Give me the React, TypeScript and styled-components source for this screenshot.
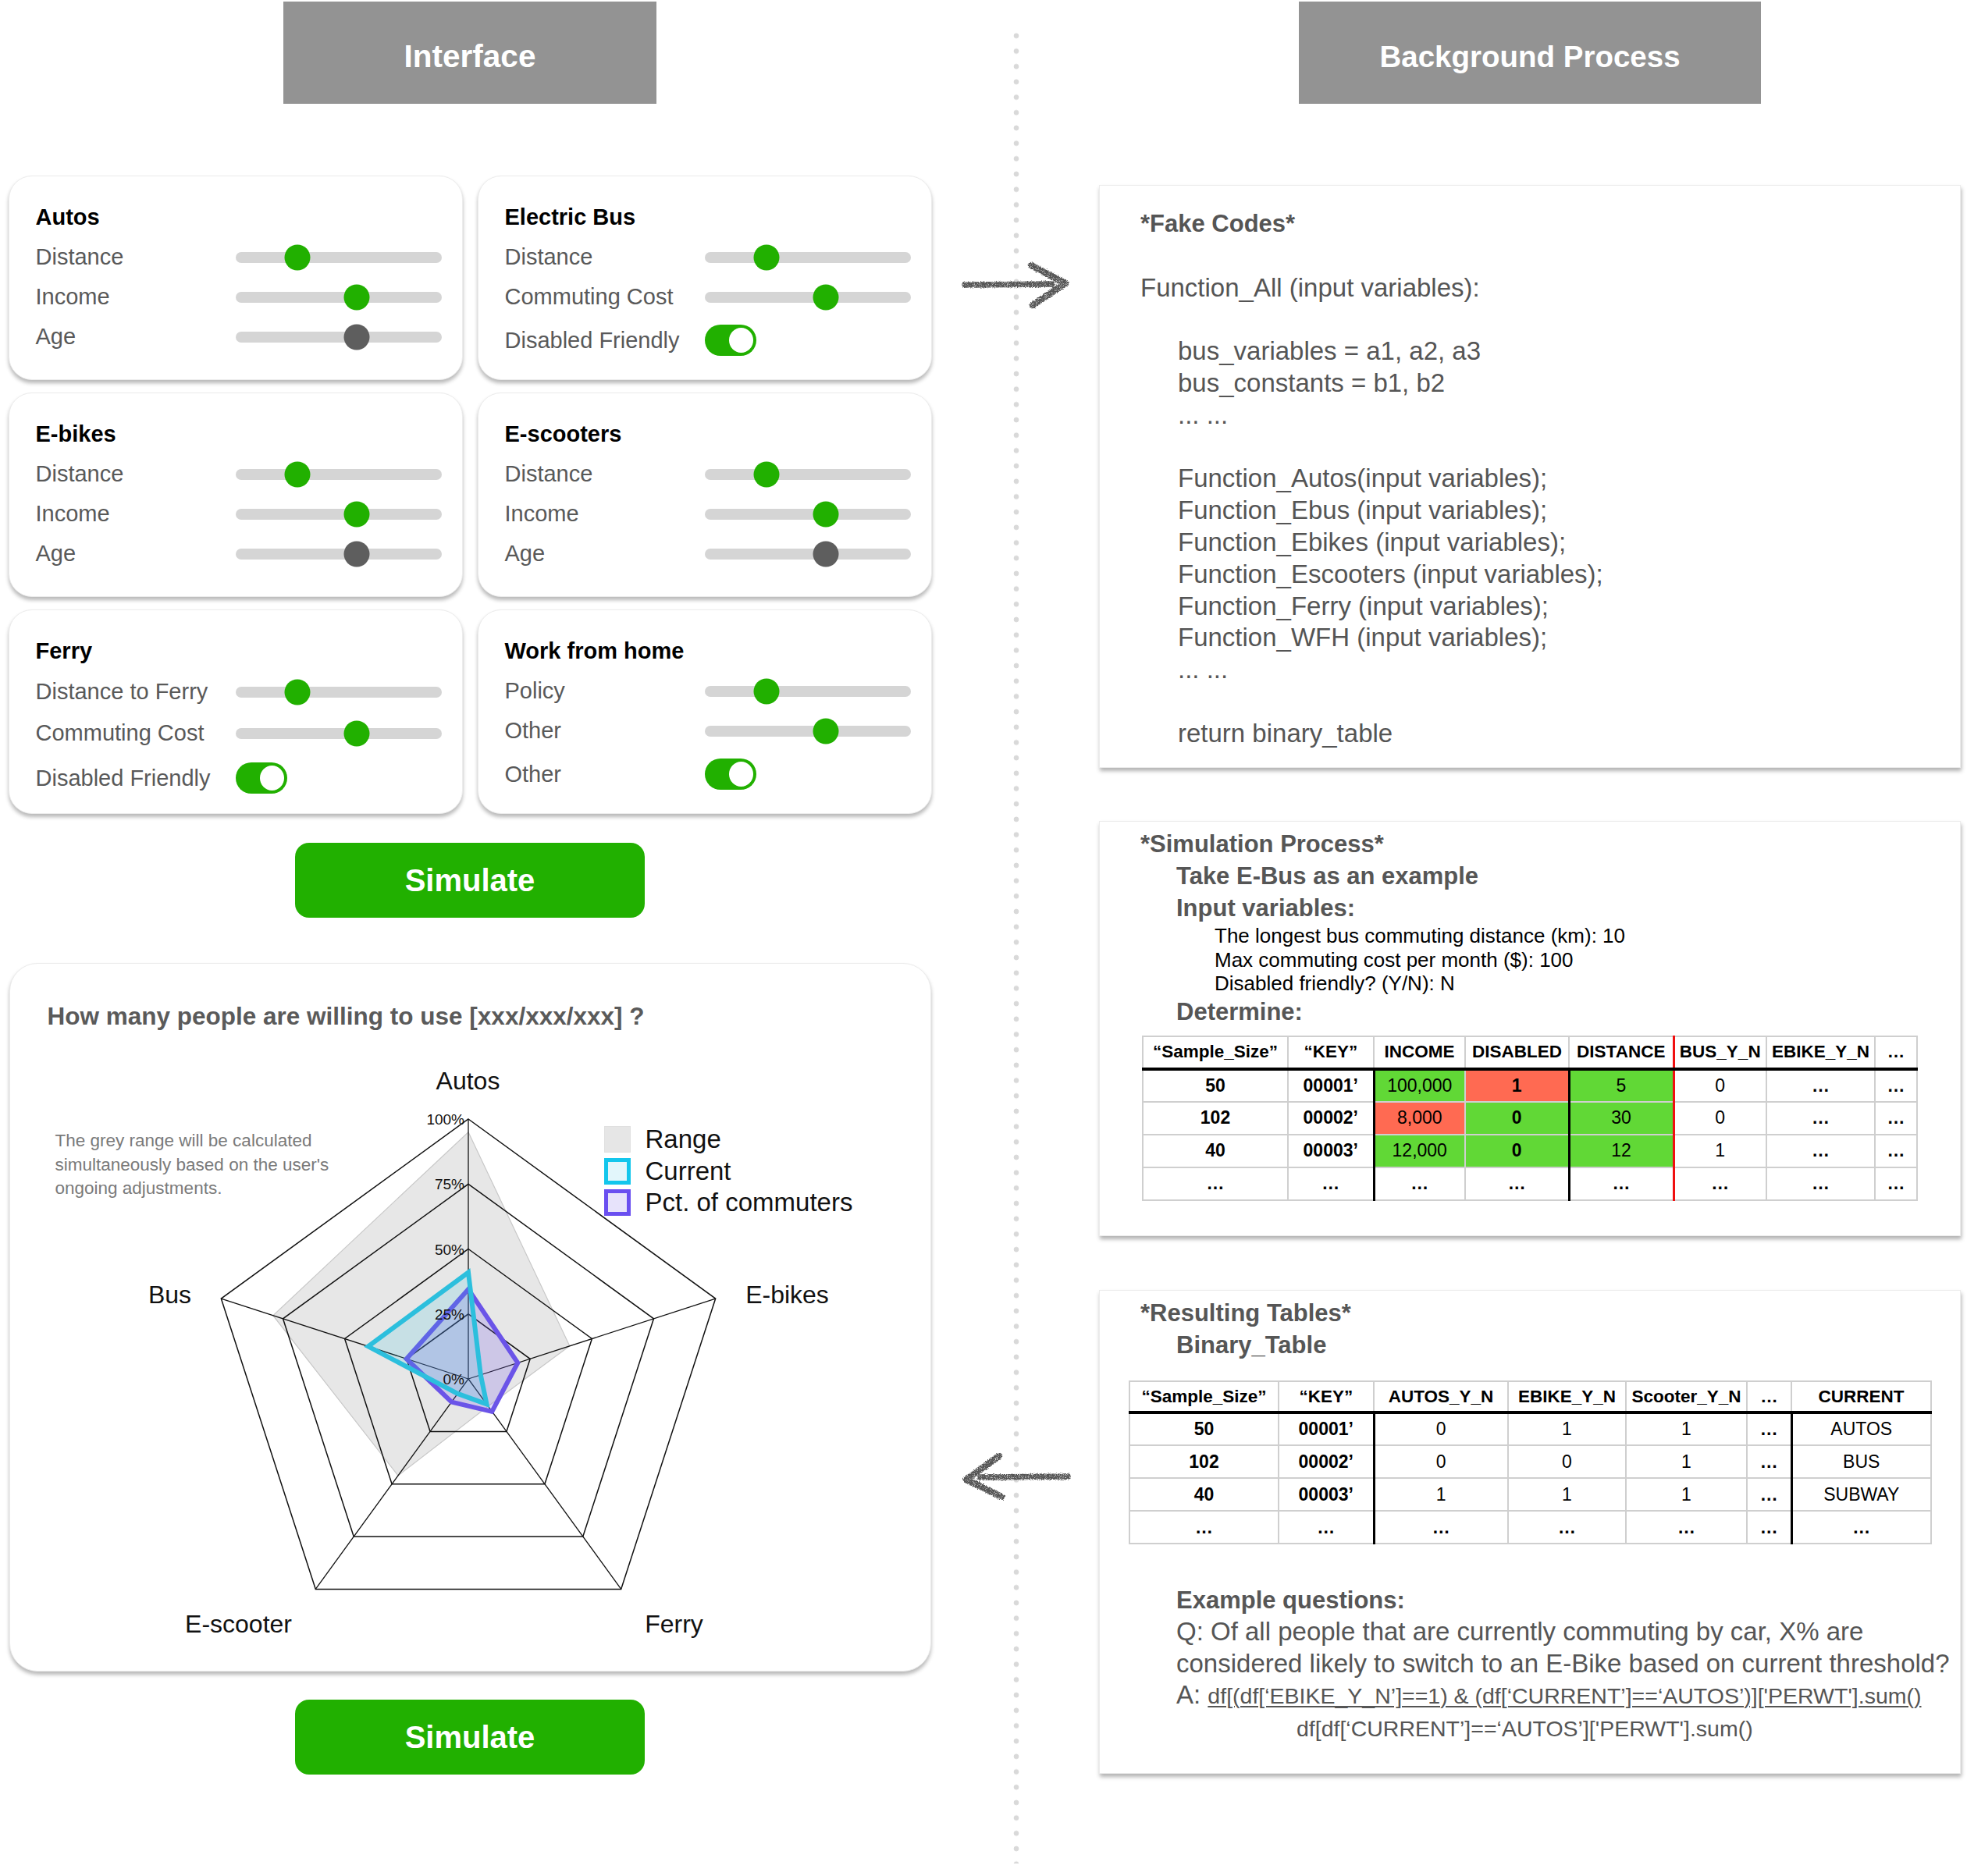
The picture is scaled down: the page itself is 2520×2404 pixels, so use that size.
import React from "react";
import styled, { createGlobalStyle } from "styled-components";

const FONT = `"Liberation Sans", Arial, Helvetica, sans-serif`;

const GlobalStyle = createGlobalStyle`
  *, *::before, *::after { box-sizing: border-box; }
  html, body { margin: 0; padding: 0; background: #ffffff; }
  body { font-family: ${FONT}; }
`;

/* ---------- page skeleton ---------- */
const Page = styled.div`
  width: 2520px;
  height: 2404px;
  display: flex;
  background: #fff;
  overflow: hidden;
  font-family: ${FONT};
`;

const LeftColumn = styled.section`
  width: 1204px;
  flex: none;
  padding: 2px 10px 0;
  display: flex;
  flex-direction: column;
  align-items: center;
`;

const Divider = styled.div`
  width: 196px;
  flex: none;
  padding: 36px 0 16px;
  display: flex;
  flex-direction: column;
  align-items: center;
  background-image: radial-gradient(circle, #d9d9d9 3px, rgba(217, 217, 217, 0) 3.7px);
  background-size: 12px 19.7px;
  background-repeat: repeat-y;
  background-position: center top;
  background-origin: content-box;
  background-clip: content-box;
`;

const RightColumn = styled.section`
  width: 1120px;
  flex: none;
  padding: 2px 8px 0;
  display: flex;
  flex-direction: column;
  align-items: center;
`;

const SectionHeader = styled.div<{ $w: number; $size: number }>`
  width: ${(p) => p.$w}px;
  height: 131px;
  flex: none;
  padding-top: 10px;
  background: #939393;
  color: #fff;
  display: flex;
  align-items: center;
  justify-content: center;
  font-size: ${(p) => p.$size}px;
  font-weight: 700;
`;

/* ---------- control cards ---------- */
const CardGrid = styled.div`
  margin-top: 92px;
  display: grid;
  grid-template-columns: 582px 582px;
  gap: 16px 19px;
`;

const ControlCard = styled.div`
  height: 262px;
  background: #fff;
  border: 1.5px solid #ececec;
  border-radius: 30px;
  box-shadow: 0 4px 5px rgba(0, 0, 0, 0.28);
  padding: 35px 20px 0 34px;
`;

const CardTitle = styled.div`
  font-size: 29px;
  line-height: 34px;
  font-weight: 700;
  color: #000;
  margin-bottom: 9px;
`;

const ControlRow = styled.div<{ $h: number }>`
  display: grid;
  grid-template-columns: 256px 264px;
  align-items: center;
  height: ${(p) => p.$h}px;
`;

const ControlLabel = styled.span`
  font-size: 29px;
  color: #595959;
  white-space: nowrap;
`;

const Track = styled.div`
  position: relative;
  width: 264px;
  height: 14px;
  border-radius: 7px;
  background: #d5d5d5;
`;

const Thumb = styled.span<{ $dark?: boolean }>`
  position: absolute;
  top: 50%;
  width: 33px;
  height: 33px;
  border-radius: 50%;
  background: ${(p) => (p.$dark ? "#5e5e5e" : "#21b000")};
  transform: translate(-50%, -50%);
`;

const Toggle = styled.span`
  display: flex;
  align-items: center;
  justify-content: flex-end;
  width: 66px;
  height: 40px;
  padding: 0 4px;
  border-radius: 20px;
  background: #21b000;
`;

const Knob = styled.span`
  width: 31px;
  height: 32px;
  border-radius: 50%;
  background: #fff;
`;

const SimulateButton = styled.button<{ $mt: number }>`
  margin-top: ${(p) => p.$mt}px;
  flex: none;
  width: 448px;
  height: 96px;
  border: none;
  border-radius: 18px;
  background: #21b000;
  color: #fff;
  font-family: ${FONT};
  font-size: 40px;
  font-weight: 700;
  cursor: pointer;
`;

/* ---------- chart card ---------- */
const ChartCard = styled.div`
  margin-top: 58px;
  flex: none;
  width: 1181px;
  height: 908px;
  background: #fff;
  border: 1px solid #ebebeb;
  border-radius: 36px;
  box-shadow: 0 4px 5px rgba(0, 0, 0, 0.28);
  display: flex;
  flex-direction: column;
`;

const ChartTitle = styled.h2`
  margin: 47px 0 0 48px;
  font-size: 31.5px;
  line-height: 40px;
  font-weight: 700;
  color: #5a5a5a;
  white-space: nowrap;
`;

const ChartArea = styled.div`
  margin-top: 18px;
  height: 800px;
  display: grid;
  & > * {
    grid-area: 1 / 1;
  }
`;

const ChartNote = styled.p`
  justify-self: start;
  align-self: start;
  margin: 107px 0 0 58px;
  font-size: 22.5px;
  line-height: 30.5px;
  color: #7a7a7a;
  z-index: 1;
`;

const Legend = styled.div`
  justify-self: start;
  align-self: start;
  margin: 103px 0 0 761px;
  display: flex;
  flex-direction: column;
  gap: 6px;
  z-index: 1;
`;

const LegendItem = styled.div`
  display: flex;
  align-items: center;
  gap: 19px;
  height: 34.5px;
  font-size: 33px;
  color: #111;
  white-space: nowrap;
`;

const Swatch = styled.span<{ $kind: "range" | "current" | "pct" }>`
  width: 34px;
  height: 34px;
  flex: none;
  background: ${(p) =>
    p.$kind === "range" ? "#e6e6e6" : p.$kind === "current" ? "#e2f6fb" : "#e7e3fb"};
  border: ${(p) =>
    p.$kind === "range"
      ? "1px solid #e0e0e0"
      : p.$kind === "current"
      ? "5px solid #13c6ec"
      : "5px solid #6a4ff0"};
`;

const RadarSvg = styled.svg`
  display: block;
  font-family: ${FONT};
`;

/* ---------- right side cards ---------- */
const ProcessCard = styled.div<{ $h: number; $mt: number; $pt: number }>`
  width: 1104px;
  height: ${(p) => p.$h}px;
  margin-top: ${(p) => p.$mt}px;
  flex: none;
  background: #fff;
  border: 1px solid #ececec;
  box-shadow: 1px 4px 5px rgba(0, 0, 0, 0.3);
  padding: ${(p) => p.$pt}px 0 0 52px;
  display: flex;
  flex-direction: column;
  align-items: flex-start;
`;

const CodeLine = styled.div<{ $indent?: boolean; $bold?: boolean }>`
  height: 40.8px;
  line-height: 40.8px;
  font-size: ${(p) => (p.$bold ? 31 : 33)}px;
  font-weight: ${(p) => (p.$bold ? 700 : 400)};
  color: #555;
  padding-left: ${(p) => (p.$indent ? 48 : 0)}px;
  white-space: nowrap;
`;

const Heading = styled.div<{ $indent?: number; $mt?: number }>`
  font-size: 31px;
  line-height: 41px;
  font-weight: 700;
  color: #565656;
  padding-left: ${(p) => p.$indent ?? 0}px;
  margin-top: ${(p) => p.$mt ?? 0}px;
  white-space: nowrap;
`;

const DetailLine = styled.div`
  font-size: 26px;
  line-height: 30.5px;
  color: #000;
  padding-left: 95px;
  white-space: nowrap;
`;

const ProseLine = styled.div<{ $indent?: number }>`
  font-size: 33px;
  line-height: 40.5px;
  color: #555;
  padding-left: ${(p) => p.$indent ?? 46}px;
  white-space: nowrap;
`;

const Formula = styled.span<{ $under?: boolean }>`
  font-size: 28.5px;
  text-decoration: ${(p) => (p.$under ? "underline" : "none")};
  text-decoration-thickness: 1.5px;
  text-underline-offset: 3px;
`;

const DataTable = styled.table<{ $mt: number; $ml: number }>`
  margin: ${(p) => p.$mt}px 0 0 ${(p) => p.$ml}px;
  border-collapse: collapse;
  table-layout: fixed;
  color: #000;
  font-family: ${FONT};
`;

const Th = styled.th<{ $h: number; $red?: boolean }>`
  height: ${(p) => p.$h}px;
  padding: 0;
  border: 2px solid #cfcfcf;
  border-bottom: 4px solid #000;
  ${(p) => (p.$red ? "border-left: 3px solid #f01010;" : "")}
  font-size: 22.5px;
  font-weight: 700;
  text-align: center;
  white-space: nowrap;
  overflow: visible;
`;

const Td = styled.td<{ $bg?: string; $bold?: boolean; $edge?: "black" | "red" }>`
  height: 42px;
  padding: 0;
  border: 2px solid #cfcfcf;
  ${(p) =>
    p.$edge === "black"
      ? "border-left: 3px solid #000;"
      : p.$edge === "red"
      ? "border-left: 3px solid #f01010;"
      : ""}
  background: ${(p) => p.$bg ?? "transparent"};
  font-size: 23px;
  font-weight: ${(p) => (p.$bold ? 700 : 400)};
  text-align: center;
  white-space: nowrap;
`;

/* ---------- data ---------- */
type Row = { label: string; value?: number; dark?: boolean; toggle?: boolean };
type Card = { title: string; rows: Row[]; rowH?: number };

const CARDS: Card[] = [
  { title: "Autos", rows: [{ label: "Distance", value: 0.3 }, { label: "Income", value: 0.59 }, { label: "Age", value: 0.59, dark: true }] },
  { title: "Electric Bus", rows: [{ label: "Distance", value: 0.3 }, { label: "Commuting Cost", value: 0.59 }, { label: "Disabled Friendly", toggle: true }] },
  { title: "E-bikes", rows: [{ label: "Distance", value: 0.3 }, { label: "Income", value: 0.59 }, { label: "Age", value: 0.59, dark: true }] },
  { title: "E-scooters", rows: [{ label: "Distance", value: 0.3 }, { label: "Income", value: 0.59 }, { label: "Age", value: 0.59, dark: true }] },
  { title: "Ferry", rowH: 53, rows: [{ label: "Distance to Ferry", value: 0.3 }, { label: "Commuting Cost", value: 0.59 }, { label: "Disabled Friendly", toggle: true }] },
  { title: "Work from home", rows: [{ label: "Policy", value: 0.3 }, { label: "Other", value: 0.59 }, { label: "Other", toggle: true }] },
];

const AXES = [
  { name: "Autos", x: 586.5, y: 45 },
  { name: "E-bikes", x: 995.5, y: 319 },
  { name: "Ferry", x: 850.5, y: 741 },
  { name: "E-scooter", x: 292.5, y: 741 },
  { name: "Bus", x: 204.5, y: 319 },
];
const ANG = [-90, -18, 54, 126, 198].map((d) => (d * Math.PI) / 180);
const CX = 587;
const CY = 427;
const R = 333;
const pt = (i: number, r: number) => [CX + Math.cos(ANG[i]) * R * r, CY + Math.sin(ANG[i]) * R * r];
const poly = (vals: number[]) => vals.map((v, i) => pt(i, v).map((n) => n.toFixed(1)).join(",")).join(" ");

const RANGE = [0.95, 0.41, 0.13, 0.46, 0.79];
const CURRENT = [0.41, 0.05, 0.12, 0.07, 0.405];
const PCT = [0.345, 0.2, 0.155, 0.11, 0.25];

const GREEN = "#61d836";
const RED = "#ff6a52";

/* ---------- pieces ---------- */
function ControlPanel({ card }: { card: Card }) {
  const base = card.rowH ?? 51;
  return (
    <ControlCard>
      <CardTitle>{card.title}</CardTitle>
      {card.rows.map((r, i) => (
        <ControlRow key={i} $h={r.toggle ? base + 9 : base}>
          <ControlLabel>{r.label}</ControlLabel>
          {r.toggle ? (
            <Toggle>
              <Knob />
            </Toggle>
          ) : (
            <Track>
              <Thumb $dark={r.dark} style={{ left: `${(r.value ?? 0) * 100}%` }} />
            </Track>
          )}
        </ControlRow>
      ))}
    </ControlCard>
  );
}

function Radar() {
  const rings = [0.25, 0.5, 0.75, 1];
  return (
    <RadarSvg width="1179" height="800" viewBox="0 0 1179 800">
      <polygon points={poly(RANGE)} fill="#e7e7e7" stroke="#c8c8c8" strokeWidth="1.2" />
      {rings.map((r) => (
        <polygon key={r} points={poly([r, r, r, r, r])} fill="none" stroke="#111" strokeWidth="1.5" />
      ))}
      {ANG.map((_, i) => {
        const [x, y] = pt(i, 1);
        return <line key={i} x1={CX} y1={CY} x2={x} y2={y} stroke="#111" strokeWidth="1.3" />;
      })}
      <polygon points={poly(PCT)} fill="rgba(112, 88, 232, 0.22)" stroke="#6b54e8" strokeWidth="6" strokeLinejoin="miter" />
      <polygon points={poly(CURRENT)} fill="rgba(40, 190, 222, 0.17)" stroke="#2cbfdd" strokeWidth="6" strokeLinejoin="miter" />
      {[0, 1, 2, 3, 4].map((k) => (
        <text key={k} x={CX - 5} y={CY - (R * k) / 4 + 7} fontSize="19" textAnchor="end" fill="#111">
          {k * 25}%
        </text>
      ))}
      {AXES.map((a) => (
        <text key={a.name} x={a.x} y={a.y} fontSize="32" textAnchor="middle" dominantBaseline="central" fill="#111">
          {a.name}
        </text>
      ))}
    </RadarSvg>
  );
}

function ChalkArrow({ dir, top, id }: { dir: "right" | "left"; top: number; id: string }) {
  return (
    <svg width="140" height="64" viewBox="0 0 140 64" style={{ display: "block", flex: "none", marginTop: top }}>
      <defs>
        <filter id={id} x="-10%" y="-30%" width="120%" height="160%">
          <feTurbulence type="fractalNoise" baseFrequency="0.85" numOctaves="2" seed="4" result="noise" />
          <feDisplacementMap in="SourceGraphic" in2="noise" scale="4" xChannelSelector="R" yChannelSelector="G" result="disp" />
          <feTurbulence type="fractalNoise" baseFrequency="1.4" numOctaves="1" seed="11" result="grain" />
          <feColorMatrix
            in="grain"
            type="matrix"
            values="0 0 0 0 0  0 0 0 0 0  0 0 0 0 0  3.2 0 0 0 -0.55"
            result="mask"
          />
          <feComposite in="disp" in2="mask" operator="in" />
        </filter>
      </defs>
      <g stroke="#555" fill="none" strokeLinecap="round" strokeLinejoin="round" filter={`url(#${id})`}>
        {dir === "right" ? (
          <>
            <path d="M4 31 L116 30" strokeWidth="7.5" />
            <path d="M89 6 L133 29 L91 57" strokeWidth="8.5" />
          </>
        ) : (
          <>
            <path d="M24 33 L136 32" strokeWidth="7.5" />
            <path d="M48 6 L6 36 L51 58" strokeWidth="8.5" />
          </>
        )}
      </g>
    </svg>
  );
}

const CODE: { text: string; indent?: boolean; bold?: boolean }[] = [
  { text: "*Fake Codes*", bold: true },
  { text: "" },
  { text: "Function_All (input variables):" },
  { text: "" },
  { text: "bus_variables = a1, a2, a3", indent: true },
  { text: "bus_constants = b1, b2", indent: true },
  { text: "... ...", indent: true },
  { text: "" },
  { text: "Function_Autos(input variables);", indent: true },
  { text: "Function_Ebus (input variables);", indent: true },
  { text: "Function_Ebikes (input variables);", indent: true },
  { text: "Function_Escooters (input variables);", indent: true },
  { text: "Function_Ferry (input variables);", indent: true },
  { text: "Function_WFH (input variables);", indent: true },
  { text: "... ...", indent: true },
  { text: "" },
  { text: "return binary_table", indent: true },
];

type Cell = { t: string; bg?: string; bold?: boolean; edge?: "black" | "red" };

const SIM_COLS = [186, 110, 117, 133, 134, 119, 139, 54];
const SIM_HEAD = ["“Sample_Size”", "“KEY”", "INCOME", "DISABLED", "DISTANCE", "BUS_Y_N", "EBIKE_Y_N", "…"];
const simRow = (a: string, b: string, inc: string, incBg: string, dis: string, disBg: string, dist: string, bus: string, last?: boolean): Cell[] => [
  { t: a, bold: true },
  { t: b, bold: true },
  { t: inc, bg: incBg, edge: "black", bold: last },
  { t: dis, bg: disBg, bold: true },
  { t: dist, bg: last ? undefined : GREEN, edge: "black", bold: last },
  { t: bus, edge: "red", bold: last },
  { t: "…", bold: true },
  { t: "…", bold: true },
];
const SIM_ROWS: Cell[][] = [
  simRow("50", "00001’", "100,000", GREEN, "1", RED, "5", "0"),
  simRow("102", "00002’", "8,000", RED, "0", GREEN, "30", "0"),
  simRow("40", "00003’", "12,000", GREEN, "0", GREEN, "12", "1"),
  simRow("…", "…", "…", "", "…", "", "…", "…", true),
];

const BIN_COLS = [191, 122, 172, 151, 155, 57, 179];
const BIN_HEAD = ["“Sample_Size”", "“KEY”", "AUTOS_Y_N", "EBIKE_Y_N", "Scooter_Y_N", "…", "CURRENT"];
const binRow = (a: string, b: string, c: string, d: string, e: string, cur: string, last?: boolean): Cell[] => [
  { t: a, bold: true },
  { t: b, bold: true },
  { t: c, edge: "black", bold: last },
  { t: d, bold: last },
  { t: e, bold: last },
  { t: "…", bold: true },
  { t: cur, edge: "black", bold: last },
];
const BIN_ROWS: Cell[][] = [
  binRow("50", "00001’", "0", "1", "1", "AUTOS"),
  binRow("102", "00002’", "0", "0", "1", "BUS"),
  binRow("40", "00003’", "1", "1", "1", "SUBWAY"),
  binRow("…", "…", "…", "…", "…", "…", true),
];

function Table({ cols, head, rows, headH, redAt, mt, ml }: { cols: number[]; head: string[]; rows: Cell[][]; headH: number; redAt?: number; mt: number; ml: number }) {
  return (
    <DataTable $mt={mt} $ml={ml} style={{ width: cols.reduce((a, b) => a + b, 0) }}>
      <colgroup>
        {cols.map((w, i) => (
          <col key={i} style={{ width: w }} />
        ))}
      </colgroup>
      <thead>
        <tr>
          {head.map((h, i) => (
            <Th key={i} $h={headH} $red={redAt === i}>
              {h}
            </Th>
          ))}
        </tr>
      </thead>
      <tbody>
        {rows.map((r, ri) => (
          <tr key={ri}>
            {r.map((c, ci) => (
              <Td key={ci} $bg={c.bg || undefined} $bold={c.bold} $edge={c.edge}>
                {c.t}
              </Td>
            ))}
          </tr>
        ))}
      </tbody>
    </DataTable>
  );
}

export default function App() {
  return (
    <>
      <GlobalStyle />
      <Page>
        <LeftColumn>
          <SectionHeader $w={478} $size={40.5}>Interface</SectionHeader>
          <CardGrid>
            {CARDS.map((c) => (
              <ControlPanel key={c.title} card={c} />
            ))}
          </CardGrid>
          <SimulateButton $mt={37}>Simulate</SimulateButton>
          <ChartCard>
            <ChartTitle>How many people are willing to use [xxx/xxx/xxx] ?</ChartTitle>
            <ChartArea>
              <Radar />
              <ChartNote>
                The grey range will be calculated
                <br />
                simultaneously based on the user's
                <br />
                ongoing adjustments.
              </ChartNote>
              <Legend>
                <LegendItem>
                  <Swatch $kind="range" />
                  Range
                </LegendItem>
                <LegendItem>
                  <Swatch $kind="current" />
                  Current
                </LegendItem>
                <LegendItem>
                  <Swatch $kind="pct" />
                  Pct. of commuters
                </LegendItem>
              </Legend>
            </ChartArea>
          </ChartCard>
          <SimulateButton $mt={36}>Simulate</SimulateButton>
        </LeftColumn>

        <Divider>
          <ChalkArrow dir="right" top={298} id="chalk-right" />
          <ChalkArrow dir="left" top={1462} id="chalk-left" />
        </Divider>

        <RightColumn>
          <SectionHeader $w={592} $size={38.5}>Background Process</SectionHeader>

          <ProcessCard $h={747} $mt={104} $pt={29}>
            {CODE.map((l, i) => (
              <CodeLine key={i} $indent={l.indent} $bold={l.bold}>
                {l.text}
              </CodeLine>
            ))}
          </ProcessCard>

          <ProcessCard $h={532} $mt={68} $pt={8}>
            <Heading>*Simulation Process*</Heading>
            <Heading $indent={46}>Take E-Bus as an example</Heading>
            <Heading $indent={46}>Input variables:</Heading>
            <DetailLine>The longest bus commuting distance (km): 10</DetailLine>
            <DetailLine>Max commuting cost per month ($): 100</DetailLine>
            <DetailLine>Disabled friendly? (Y/N): N</DetailLine>
            <Heading $indent={46}>Determine:</Heading>
            <Table cols={SIM_COLS} head={SIM_HEAD} rows={SIM_ROWS} headH={42} redAt={5} mt={10} ml={2} />
          </ProcessCard>

          <ProcessCard $h={620} $mt={69} $pt={8}>
            <Heading>*Resulting Tables*</Heading>
            <Heading $indent={46}>Binary_Table</Heading>
            <Table cols={BIN_COLS} head={BIN_HEAD} rows={BIN_ROWS} headH={40} mt={25} ml={-15} />
            <Heading $indent={46} $mt={51}>
              Example questions:
            </Heading>
            <ProseLine>Q: Of all people that are currently commuting by car, X% are</ProseLine>
            <ProseLine>considered likely to switch to an E-Bike based on current threshold?</ProseLine>
            <ProseLine>
              A: <Formula $under>df[(df[‘EBIKE_Y_N’]==1) &amp; (df[‘CURRENT’]==‘AUTOS’)]['PERWT'].sum()</Formula>
            </ProseLine>
            <ProseLine $indent={200}>
              <Formula>df[df[‘CURRENT’]==‘AUTOS’]['PERWT'].sum()</Formula>
            </ProseLine>
          </ProcessCard>
        </RightColumn>
      </Page>
    </>
  );
}
